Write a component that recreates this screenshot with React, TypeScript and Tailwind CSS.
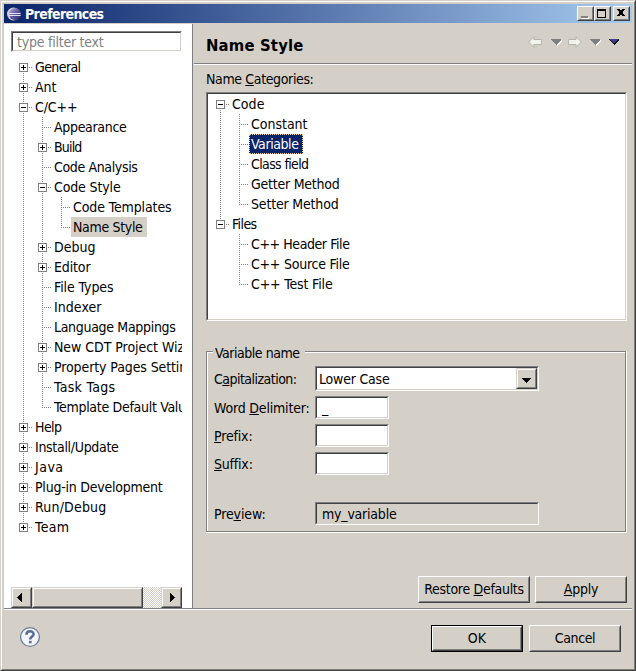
import { useLayoutEffect, useRef, type ReactNode } from "react";

/** Single-line text whose tracking is adjusted so that it spans `w` pixels. */
function T({ w, children, className = "" }: { w?: number; children: ReactNode; className?: string }) {
  const ref = useRef<HTMLSpanElement>(null);
  useLayoutEffect(() => {
    const el = ref.current;
    if (!el || !w) return;
    el.style.letterSpacing = "0px";
    const n = (el.textContent ?? "").length;
    const natural = el.getBoundingClientRect().width;
    el.style.letterSpacing = `${(w + 0.5 - natural) / n}px`;
  }, [w]);
  return (
    <span ref={ref} className={`inline-block shrink-0 whitespace-pre leading-5 ${className}`}>
      {children}
    </span>
  );
}

function U({ children }: { children: ReactNode }) {
  return <span className="underline decoration-1 underline-offset-[1px] [text-decoration-skip-ink:none]">{children}</span>;
}

function Sunken({ className = "", inner = "bg-white", children }: { className?: string; inner?: string; children?: ReactNode }) {
  return (
    <div className={`border border-t-[#808080] border-l-[#808080] border-r-white border-b-white ${className}`}>
      <div className={`flex h-full w-full overflow-hidden border border-t-[#404040] border-l-[#404040] border-r-[#d4d0c8] border-b-[#d4d0c8] ${inner}`}>
        {children}
      </div>
    </div>
  );
}

function Button({ className = "", children }: { className?: string; children?: ReactNode }) {
  return (
    <div className={`border border-t-white border-l-white border-r-[#404040] border-b-[#404040] ${className}`}>
      <div className="flex h-full w-full items-center justify-center border border-t-[#d4d0c8] border-l-[#d4d0c8] border-r-[#808080] border-b-[#808080] bg-[#d4d0c8]">
        {children}
      </div>
    </div>
  );
}

function BarButton({ className = "", children }: { className?: string; children?: ReactNode }) {
  return (
    <div className={`shrink-0 border border-t-[#d4d0c8] border-l-[#d4d0c8] border-r-[#404040] border-b-[#404040] ${className}`}>
      <div className="flex h-full w-full items-center justify-center border border-t-white border-l-white border-r-[#808080] border-b-[#808080] bg-[#d4d0c8]">
        {children}
      </div>
    </div>
  );
}

type Node = { label: string; w: number; box?: "+" | "-"; sel?: "gray" | "blue"; kids?: Node[] };

const pages: Node[] = [
  { label: "General", w: 45, box: "+" },
  { label: "Ant", w: 21, box: "+" },
  {
    label: "C/C++", w: 42, box: "-",
    kids: [
      { label: "Appearance", w: 72 },
      { label: "Build", w: 27, box: "+" },
      { label: "Code Analysis", w: 83 },
      {
        label: "Code Style", w: 66, box: "-",
        kids: [
          { label: "Code Templates", w: 98 },
          { label: "Name Style", w: 69, sel: "gray" },
        ],
      },
      { label: "Debug", w: 41, box: "+" },
      { label: "Editor", w: 36, box: "+" },
      { label: "File Types", w: 59 },
      { label: "Indexer", w: 47 },
      { label: "Language Mappings", w: 121 },
      { label: "New CDT Project Wizard", w: 150, box: "+" },
      { label: "Property Pages Settings", w: 147, box: "+" },
      { label: "Task Tags", w: 61 },
      { label: "Template Default Values", w: 145 },
    ],
  },
  { label: "Help", w: 26, box: "+" },
  { label: "Install/Update", w: 83, box: "+" },
  { label: "Java", w: 28, box: "+" },
  { label: "Plug-in Development", w: 127, box: "+" },
  { label: "Run/Debug", w: 71, box: "+" },
  { label: "Team", w: 34, box: "+" },
];

const categories: Node[] = [
  {
    label: "Code", w: 32, box: "-",
    kids: [
      { label: "Constant", w: 56 },
      { label: "Variable", w: 47, sel: "blue" },
      { label: "Class field", w: 57 },
      { label: "Getter Method", w: 88 },
      { label: "Setter Method", w: 87 },
    ],
  },
  {
    label: "Files", w: 24, box: "-",
    kids: [
      { label: "C++ Header File", w: 98 },
      { label: "C++ Source File", w: 98 },
      { label: "C++ Test File", w: 81 },
    ],
  },
];

function Guide({ up, down, branch, box }: { up: boolean; down: boolean; branch: boolean; box?: "+" | "-" }) {
  const y1 = up ? 0 : 10;
  const y2 = down ? 20 : 11;
  return (
    <svg width="19" height="20" className="shrink-0" shapeRendering="crispEdges" fill="none">
      {(up || down) && <path d={`M9.5 ${y1}V${y2}`} stroke="#808080" strokeDasharray="1 1" />}
      {branch && <path d="M9 10.5H19" stroke="#808080" strokeDasharray="1 1" />}
      {box && <rect x="5.5" y="6.5" width="8" height="8" fill="#fff" stroke="#808080" />}
      {box && <path d="M7 10.5h5" stroke="#000" />}
      {box === "+" && <path d="M9.5 8v5" stroke="#000" />}
    </svg>
  );
}

function Rows({ nodes, trail = [] }: { nodes: Node[]; trail?: boolean[] }) {
  return (
    <>
      {nodes.map((n, i) => {
        const last = i === nodes.length - 1;
        const sel =
          n.sel === "blue"
            ? "bg-[#0a246a] text-white outline-1 -outline-offset-1 outline-dotted outline-[#f5db95]"
            : n.sel === "gray"
              ? "bg-[#d4d0c8]"
              : "";
        return (
          <div key={n.label}>
            <div className="flex h-5">
              {trail.map((more, k) => (
                <Guide key={k} up={more} down={more} branch={false} />
              ))}
              <Guide up={i > 0 || trail.length > 0} down={!last} branch box={n.box} />
              <div className={`h-5 shrink-0 pl-0.5 pr-1 ${sel}`}>
                <T w={n.w}>{n.label}</T>
              </div>
            </div>
            {n.kids && <Rows nodes={n.kids} trail={[...trail, !last]} />}
          </div>
        );
      })}
    </>
  );
}

function EclipseIcon() {
  return (
    <svg width="16" height="16" viewBox="0 0 16 16">
      <defs>
        <linearGradient id="orb" x1="0" y1="0" x2="1" y2="1">
          <stop offset="0" stopColor="#b9b4dc" />
          <stop offset="0.5" stopColor="#5f58a0" />
          <stop offset="1" stopColor="#2b2460" />
        </linearGradient>
      </defs>
      <circle cx="7.4" cy="8" r="6.4" fill="#cfcbdc" />
      <circle cx="9" cy="8" r="6" fill="url(#orb)" />
      <path d="M3 7.5H14.6M3 9.5H14.6" stroke="#eef0fb" strokeWidth="0.9" />
    </svg>
  );
}

function NavArrow({ flip = false }: { flip?: boolean }) {
  return (
    <svg width="14" height="12" viewBox="0 0 14 12" className={flip ? "-scale-x-100" : ""}>
      <path d="M.7 6L5.9 .6V3.5H13.4V8.5H5.9V11.4Z" fill="#f3f3ee" stroke="#b4b2aa" strokeWidth="1" />
    </svg>
  );
}

function NavTriangle({ dark = false }: { dark?: boolean }) {
  return (
    <svg width="11" height="7" viewBox="0 0 11 7" shapeRendering="crispEdges">
      {!dark && <path d="M1 1H11V2L6 7L5 6Z" fill="#fff" />}
      <path d="M0 0H10V1L5.5 5.5H4.5L0 1Z" fill={dark ? "#111" : "#808080"} />
      {dark && <path d="M1 0H9L4.5 4.5L1 1Z" fill="#433b8c" />}
    </svg>
  );
}

function Field({ value, className = "" }: { value?: string; className?: string }) {
  return (
    <Sunken className={`h-[23px] w-[74px] ${className}`}>
      {value && <T className="ml-[5px]">{value}</T>}
    </Sunken>
  );
}

export default function App() {
  return (
    <div className="h-[671px] w-[636px] overflow-hidden border border-t-[#d4d0c8] border-l-[#d4d0c8] border-r-[#404040] border-b-[#404040] bg-[#d4d0c8] font-['DejaVu_Sans_Condensed','DejaVu_Sans',sans-serif] text-[14px] text-black">
      <div className="flex h-full flex-col border border-t-white border-l-white border-r-[#808080] border-b-[#808080] p-0.5">
        {/* Title bar */}
        <div className="flex h-[19px] shrink-0 items-center bg-linear-to-r/srgb from-[#0a246a] to-[#a6caf0] pr-0.5 pl-0.5">
          <EclipseIcon />
          <T w={78} className="ml-[3px] text-[14px] font-bold text-white">Preferences</T>
          <div className="ml-auto flex">
            <Button className="h-[15px] w-[17px]">
              <svg width="13" height="11" shapeRendering="crispEdges">
                <path d="M3 9h7v2h-7z" fill="#fff" />
                <path d="M2 8h7v2h-7z" fill="#808080" />
              </svg>
            </Button>
            <Button className="h-[15px] w-[17px]">
              <svg width="13" height="11" shapeRendering="crispEdges">
                <path d="M1 1h9v9h-9zM2 3v6h7v-6z" fillRule="evenodd" />
              </svg>
            </Button>
            <Button className="ml-0.5 h-[15px] w-[17px]">
              <svg width="13" height="11" shapeRendering="crispEdges">
                <path d="M2 1h3v1h2v-1h3v1h-1v1h-1v3h1v1h1v1h-3v-1h-2v1h-3v-1h1v-1h1v-3h-1v-1h-1z" />
              </svg>
            </Button>
          </div>
        </div>

        {/* Body */}
        <div className="mt-px flex h-[584px] shrink-0">
          <div className="flex w-[189px] shrink-0 flex-col border-r border-[#808080] bg-white pt-[7px] pl-[7px]">
            <Sunken className="h-[21px] w-[171px] shrink-0">
              <T w={86} className="-mt-px ml-1 text-[#808080]">type filter text</T>
            </Sunken>
            <div className="mt-[5px] ml-[3px] h-[530px] w-[168px] overflow-hidden">
              <Rows nodes={pages} />
            </div>
            <div className="flex h-[21px] w-[171px]">
              <BarButton className="h-[21px] w-[21px]">
                <svg width="5" height="9" className="-ml-1" shapeRendering="crispEdges">
                  <path d="M5 0v9h-1v-1h-1v-1h-1v-1h-1v-1h-1v-1h1v-1h1v-1h1v-1h1v-1z" />
                </svg>
              </BarButton>
              <BarButton className="h-[21px] w-[111px]" />
              <div className="h-full grow bg-[repeating-conic-gradient(#d4d0c8_0_25%,#fff_0_50%)] bg-size-[2px_2px]" />
              <BarButton className="h-[21px] w-[21px]">
                <svg width="5" height="9" className="ml-0.5" shapeRendering="crispEdges">
                  <path d="M0 0v9h1v-1h1v-1h1v-1h1v-1h1v-1h-1v-1h-1v-1h-1v-1h-1v-1z" />
                </svg>
              </BarButton>
            </div>
          </div>

          <div className="ml-px flex grow flex-col">
            <div className="flex h-[39px] shrink-0 pl-3">
              <T w={97} className="mt-3 text-[16.5px] font-bold">Name Style</T>
              <div className="mt-3 mr-3 ml-auto flex h-3 items-center">
                <NavArrow />
                <div className="ml-[9px]"><NavTriangle /></div>
                <div className="ml-1.5"><NavArrow flip /></div>
                <div className="ml-2"><NavTriangle /></div>
                <div className="ml-2"><NavTriangle dark /></div>
              </div>
            </div>
            <div className="h-0.5 shrink-0 border-t border-b border-t-[#808080] border-b-white" />
            <div className="flex flex-col pt-1 pl-3">
              <T w={107} className="self-start">Name <U>C</U>ategories:</T>
              <Sunken className="mt-[3px] h-[229px] w-[421px]">
                <div className="pl-[3px]">
                  <Rows nodes={categories} />
                </div>
              </Sunken>

              <div className="mt-[30px] h-[182px] w-[421px] border-r border-b border-white">
                <div className="h-full border border-[#808080]">
                  <div className="h-full border-t border-l border-white">
                    <div className="-mt-[10px] ml-[5px] flex h-5 w-[92px] bg-[#d4d0c8] pl-0.5">
                      <T w={84}>Variable name</T>
                    </div>
                    <div className="ml-1.5 grid w-[325px] grid-cols-[101px_224px]">
                      <T w={82} className="mt-1.5 justify-self-start">C<U>a</U>pitalization:</T>
                      <Sunken className="mt-[3px] h-[25px] w-[224px]">
                        <T w={70} className="mt-px ml-0.5">Lower Case</T>
                        <BarButton className="ml-auto h-[21px] w-[21px]">
                          <svg width="9" height="5" className="mt-1 -ml-px" shapeRendering="crispEdges">
                            <path d="M0 0h9v1h-1v1h-1v1h-1v1h-1v1h-1v-1h-1v-1h-1v-1h-1v-1h-1z" />
                          </svg>
                        </BarButton>
                      </Sunken>
                      <T w={95} className="mt-[7px] justify-self-start">Word <U>D</U>elimiter:</T>
                      <Field className="mt-[5px]" value="_" />
                      <T w={38} className="mt-[7px] justify-self-start"><U>P</U>refix:</T>
                      <Field className="mt-[5px]" />
                      <T w={38} className="mt-[7px] justify-self-start"><U>S</U>uffix:</T>
                      <Field className="mt-[5px]" />
                      <T w={51} className="mt-[29px] justify-self-start">Pre<U>v</U>iew:</T>
                      <Sunken className="mt-[27px] h-[23px] w-[224px]" inner="bg-[#d4d0c8]">
                        <T w={74} className="ml-[5px]">my_variable</T>
                      </Sunken>
                    </div>
                  </div>
                </div>
              </div>

              <div className="mt-[43px] ml-[212px] flex gap-[5px]">
                <Button className="h-[27px] w-[112px]"><T w={99} className="-mt-0.5">Restore <U>D</U>efaults</T></Button>
                <Button className="h-[27px] w-[92px]"><T w={34} className="-mt-0.5">
                  <U>A</U>pply
                </T></Button>
              </div>
            </div>
          </div>
        </div>

        {/* Footer */}
        <div className="flex grow border-t border-[#808080]">
          <div className="flex w-full border-t border-white pt-[15px] pl-[15px]">
            <svg width="22" height="22" viewBox="0 0 22 22" fill="none" className="mt-px">
              <circle cx="11" cy="11" r="9.4" fill="#f3f5f9" stroke="#6b7d9f" strokeWidth="1.3" />
              <path d="M7.4 8.8C7.4 4.2 14.6 4.2 14.6 8.2C14.6 10.6 11.2 10.4 11.2 13.4" stroke="#5a6d93" strokeWidth="2.5" />
              <path d="M9.9 14.8h2.7v2.5H9.9z" fill="#5a6d93" />
            </svg>
            <div className="ml-[390px] flex gap-1.5">
              <div className="h-[27px] w-[92px] border border-black">
                <Button className="h-full w-full"><T w={18} className="-mt-0.5">OK</T></Button>
              </div>
              <Button className="h-[27px] w-[92px]"><T w={40} className="-mt-0.5">Cancel</T></Button>
            </div>
          </div>
        </div>
      </div>
    </div>
  );
}
